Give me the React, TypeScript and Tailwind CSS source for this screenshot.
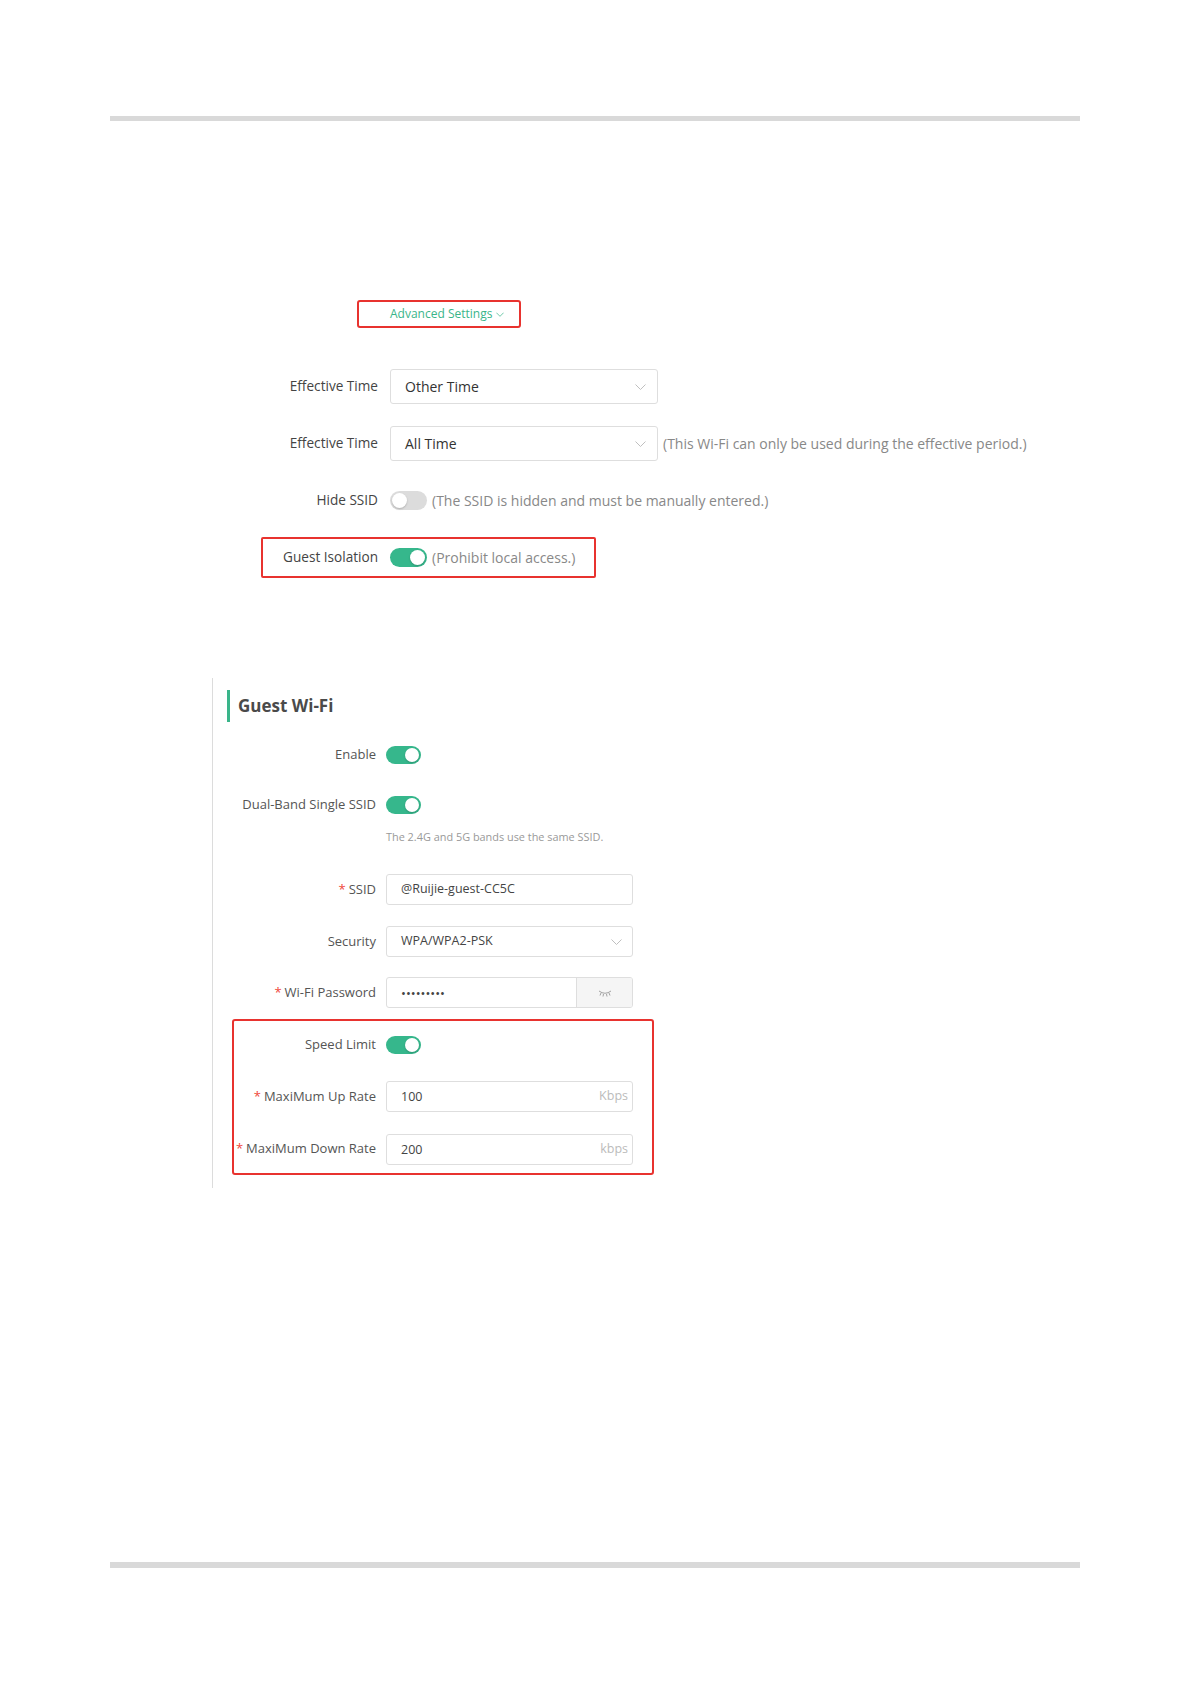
import React from "react";

const FONT = { fontFamily: '"Open Sans", "Noto Sans", "Liberation Sans", sans-serif' };

function Chevron({ color = "#bfbfbf", w = 11, h = 6 }: { color?: string; w?: number; h?: number }) {
  return (
    <svg width={w} height={h} viewBox="0 0 11 6" fill="none">
      <path d="M0.5 0.5 L5.5 5.5 L10.5 0.5" stroke={color} strokeWidth="1" />
    </svg>
  );
}

function Toggle({ on, w, h }: { on: boolean; w: number; h: number }) {
  const knob = h - 4;
  return (
    <div
      className={`relative shrink-0 rounded-full ${on ? "bg-[#36b78c]" : "bg-[#dcdcdc]"}`}
      style={{ width: w, height: h }}
    >
      <div
        className="absolute top-[2px] rounded-full bg-white shadow-[0_1px_2px_rgba(0,0,0,0.2)]"
        style={{ width: knob, height: knob, left: on ? w - knob - 2 : 2 }}
      />
    </div>
  );
}

function Req() {
  return <span className="text-[#f0473a] mr-[3px]">*</span>;
}

export default function App() {
  return (
    <div className="w-[1191px] h-[1684px] bg-white relative overflow-hidden" style={FONT}>
      {/* top rule */}
      <div className="mt-[116px] ml-[110px] w-[970px] h-[5px] bg-[#d9d9d9]" />

      {/* Advanced settings */}
      <div className="mt-[179px] ml-[357px] w-[164px] h-[28px] border-2 border-[#e8332f] rounded-[3px] flex items-center pl-[31px]">
        <span className="text-[12px] text-[#3ab58a] leading-none">Advanced Settings</span>
        <span className="ml-[4px] mt-[1px]">
          <Chevron color="#3ab58a" w={8} h={5} />
        </span>
      </div>

      {/* section 1 form */}
      <div className="mt-[30px] text-[14px]">
        <div className="h-[57px] flex items-center">
          <div className="ml-[230px] w-[148px] text-right text-[#444] text-[13.6px]">Effective Time</div>
          <div className="ml-[12px] w-[268px] h-[35px] border border-[#dedede] rounded-[3px] flex items-center justify-between pl-[14px] pr-[11px]">
            <span className="text-[14px] text-[#333]">Other Time</span>
            <Chevron />
          </div>
        </div>
        <div className="h-[57px] flex items-center">
          <div className="ml-[230px] w-[148px] text-right text-[#444] text-[13.6px]">Effective Time</div>
          <div className="ml-[12px] w-[268px] h-[35px] border border-[#dedede] rounded-[3px] flex items-center justify-between pl-[14px] pr-[11px]">
            <span className="text-[14px] text-[#333]">All Time</span>
            <Chevron />
          </div>
          <span className="ml-[5px] text-[#888]">(This Wi-Fi can only be used during the effective period.)</span>
        </div>
        <div className="h-[57px] flex items-center">
          <div className="ml-[230px] w-[148px] text-right text-[#444] text-[13.6px]">Hide SSID</div>
          <div className="ml-[12px]">
            <Toggle on={false} w={37} h={19} />
          </div>
          <span className="ml-[5px] text-[#888]">(The SSID is hidden and must be manually entered.)</span>
        </div>
        <div className="h-[57px] flex items-center">
          <div className="ml-[261px] w-[335px] h-[41px] border-2 border-[#e8332f] rounded-[2px] flex items-center">
            <div className="w-[115px] text-right text-[#444] text-[13.6px]">Guest Isolation</div>
            <div className="ml-[12px]">
              <Toggle on={true} w={37} h={19} />
            </div>
            <span className="ml-[5px] text-[#888]">(Prohibit local access.)</span>
          </div>
        </div>
      </div>

      {/* section 2 */}
      <div className="mt-[92px] ml-[212px] w-[600px] border-l border-[#dcdcdc] text-[13px] pb-[13px]">
        <div className="ml-[14px] pt-[12px]">
          <div className="h-[32px] border-l-[3px] border-[#3ab58a] pl-[8px] flex items-center">
            <span className="text-[17px] font-bold text-[#4a4a4a]">Guest Wi-Fi</span>
          </div>
        </div>

        <div className="mt-[16px] h-[34px] flex items-center">
          <div className="w-[163px] text-right text-[#555]">Enable</div>
          <div className="ml-[10px]">
            <Toggle on={true} w={35} h={18} />
          </div>
        </div>

        <div className="mt-[16px] h-[34px] flex items-center">
          <div className="w-[163px] text-right text-[#555]">Dual-Band Single SSID</div>
          <div className="ml-[10px]">
            <Toggle on={true} w={35} h={18} />
          </div>
        </div>

        <div className="mt-[7px] h-[16px] flex items-center pl-[173px] text-[10.9px] text-[#999]">
          The 2.4G and 5G bands use the same SSID.
        </div>

        <div className="mt-[29px] h-[31px] flex items-center">
          <div className="w-[163px] text-right text-[#555]">
            <Req />SSID
          </div>
          <div className="ml-[10px] w-[247px] h-[31px] border border-[#dedede] rounded-[3px] flex items-center pl-[14px] text-[#444] text-[12.5px]">
            @Ruijie-guest-CC5C
          </div>
        </div>

        <div className="mt-[21px] h-[31px] flex items-center">
          <div className="w-[163px] text-right text-[#555]">Security</div>
          <div className="ml-[10px] w-[247px] h-[31px] border border-[#dedede] rounded-[3px] flex items-center justify-between pl-[14px] pr-[10px] text-[#444] text-[12.5px]">
            <span>WPA/WPA2-PSK</span>
            <Chevron />
          </div>
        </div>

        <div className="mt-[20px] h-[31px] flex items-center">
          <div className="w-[163px] text-right text-[#555]">
            <Req />Wi-Fi Password
          </div>
          <div className="ml-[10px] w-[247px] h-[31px] border border-[#dedede] rounded-[3px] flex items-stretch overflow-hidden">
            <div className="flex-1 flex items-center pl-[14px] pt-[2px] text-[#444] text-[13px]">
              •••••••••
            </div>
            <div className="w-[56px] bg-[#f5f5f5] border-l border-[#dedede] flex items-center justify-center">
              <svg width="14" height="8" viewBox="0 0 14 8" fill="none" stroke="#999" strokeWidth="0.9">
                <path d="M1 2 Q7 6.5 13 2" />
                <path d="M3 4 L2 6.5" />
                <path d="M5.5 5 L5 7.5" />
                <path d="M8.5 5 L9 7.5" />
                <path d="M11 4 L12 6.5" />
              </svg>
            </div>
          </div>
        </div>

        <div className="mt-[11px] ml-[19px] w-[422px] h-[156px] border-2 border-[#e8332f] rounded-[3px]">
          <div className="mt-[7px] h-[34px] flex items-center">
            <div className="w-[142px] text-right text-[#555]">Speed Limit</div>
            <div className="ml-[10px]">
              <Toggle on={true} w={35} h={18} />
            </div>
          </div>
          <div className="mt-[18px] h-[33px] flex items-center">
            <div className="w-[142px] text-right text-[#555]">
              <Req />MaxiMum Up Rate
            </div>
            <div className="ml-[10px] w-[247px] h-[31px] border border-[#dedede] rounded-[3px] flex items-center justify-between pl-[14px] pr-[4px] text-[12.5px]">
              <span className="text-[#444] pt-[2px]">100</span>
              <span className="text-[#bbb]">Kbps</span>
            </div>
          </div>
          <div className="mt-[20px] h-[32px] flex items-center">
            <div className="w-[142px] text-right text-[#555]">
              <Req />MaxiMum Down Rate
            </div>
            <div className="ml-[10px] w-[247px] h-[31px] border border-[#dedede] rounded-[3px] flex items-center justify-between pl-[14px] pr-[4px] text-[12.5px]">
              <span className="text-[#444] pt-[2px]">200</span>
              <span className="text-[#bbb]">kbps</span>
            </div>
          </div>
        </div>
      </div>

      {/* bottom rule */}
      <div className="absolute left-[110px] top-[1562px] w-[970px] h-[6px] bg-[#d9d9d9]" />
    </div>
  );
}
